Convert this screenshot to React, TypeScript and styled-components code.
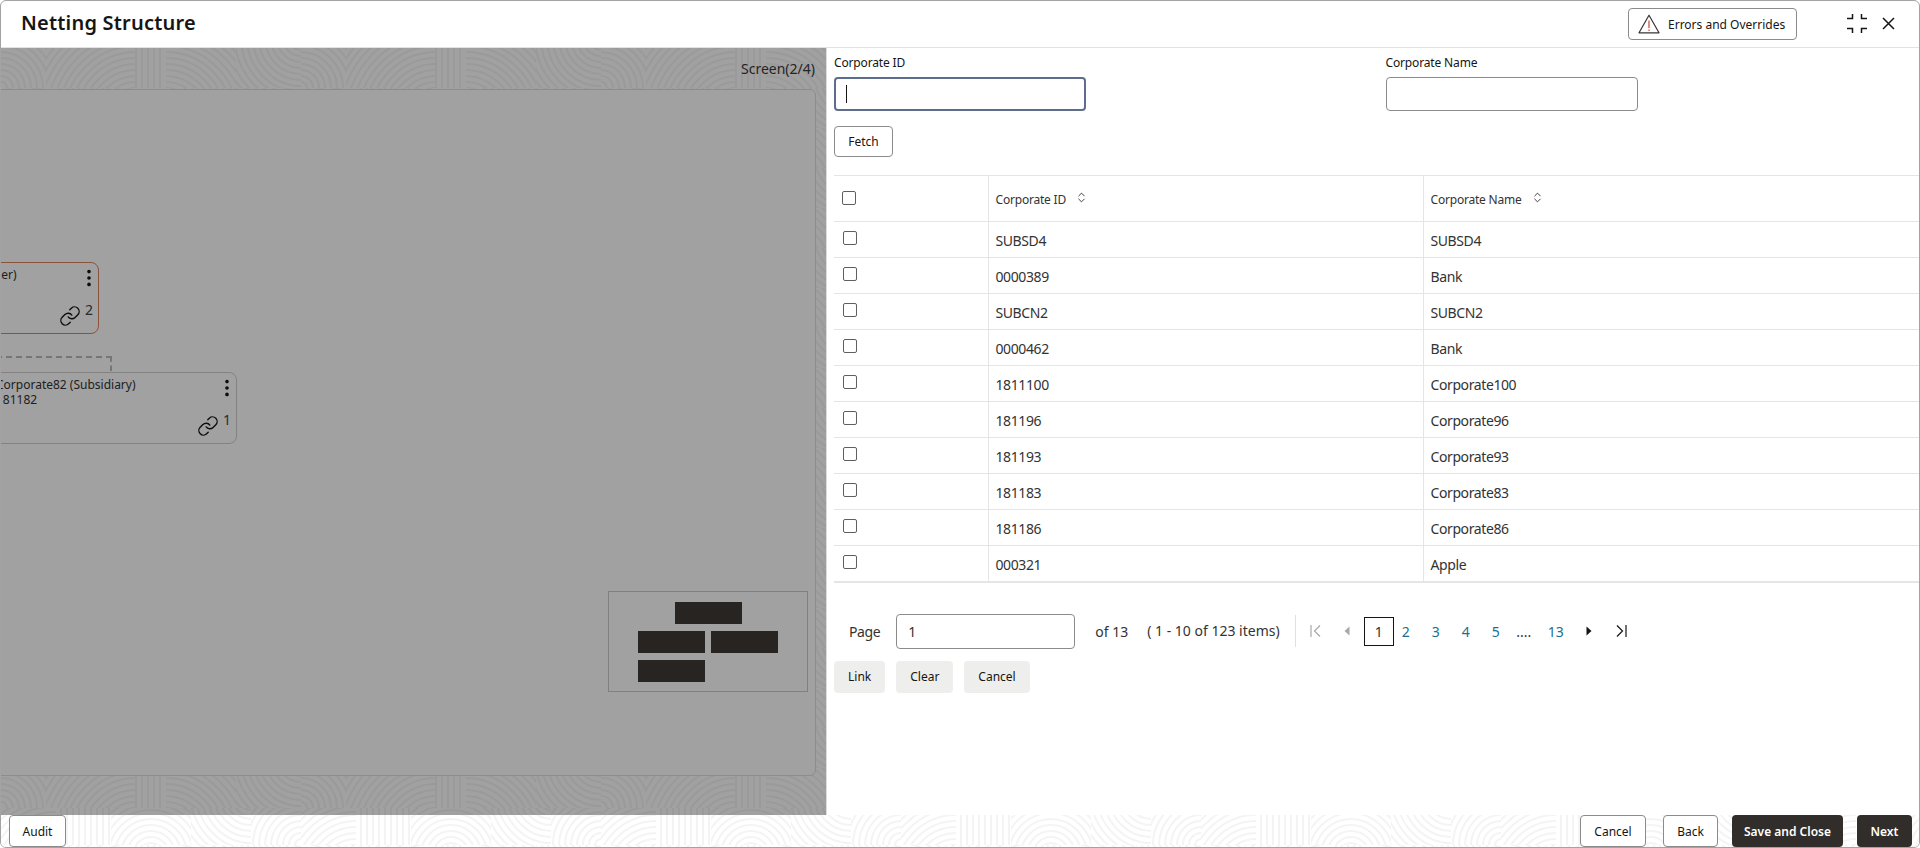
import React from 'react';
import styled, { createGlobalStyle } from 'styled-components';
import { ChevronsUpDown, EllipsisVertical, Link } from 'lucide-react';

// faint fingerprint-like background tile used behind the canvas and the footer
const arcs = (id: string, x: number, y: number, w: number, h: number, cx: number, cy: number) => {
  let circles = '';
  for (let r = 6; r < 200; r += 6) {
    circles += `<circle cx="${cx}" cy="${cy}" r="${r}"/>`;
  }
  return `<clipPath id="${id}"><rect x="${x}" y="${y}" width="${w}" height="${h}"/></clipPath><g clip-path="url(#${id})">${circles}</g>`;
};

const bars = (x: number, y: number, w: number, h: number) => {
  let lines = '';
  for (let i = x; i < x + w; i += 6) {
    lines += `<path d="M${i} ${y}V${y + h}"/>`;
  }
  return lines;
};

const tile = `<svg xmlns="http://www.w3.org/2000/svg" width="300" height="80" fill="none" stroke="#f4f4f4" stroke-width="2">
${arcs('a', 0, 0, 45, 40, 0, 40)}
${arcs('b', 45, 0, 90, 40, 135, 70)}
${bars(135, 0, 30, 40)}
${arcs('c', 165, 0, 70, 40, 165, 70)}
${arcs('d', 235, 0, 65, 40, 300, -10)}
${arcs('e', 0, 40, 55, 40, 55, 110)}
${bars(60, 40, 50, 40)}
${arcs('f', 110, 40, 80, 40, 150, 90)}
${arcs('g', 190, 40, 60, 40, 250, 30)}
${arcs('h', 250, 40, 50, 40, 300, 80)}
</svg>`;

const patternUrl = `data:image/svg+xml,${encodeURIComponent(tile)}`;

const GlobalStyle = createGlobalStyle`
  html, body {
    margin: 0;
    padding: 0;
    background: #ffffff;
  }
  * {
    box-sizing: border-box;
  }
  body {
    font-family: "Noto Sans", "Liberation Sans", sans-serif;
    color: #161513;
  }
`;

const Frame = styled.div`
  width: 1920px;
  height: 848px;
  display: flex;
  flex-direction: column;
  border: 1px solid #a3a3a3;
  border-radius: 6px;
  overflow: hidden;
  background: #ffffff;
`;

const Header = styled.header`
  height: 47px;
  flex: none;
  display: flex;
  align-items: center;
  padding: 0 24px 2px 20px;
  border-bottom: 1px solid #e2e2e2;
`;

const Title = styled.h1`
  margin: 0;
  font-size: 20px;
  line-height: 28px;
  font-weight: 600;
  letter-spacing: 0.2px;
  flex: 1;
`;

const OutlineButton = styled.button`
  height: 32px;
  padding: 0 13px;
  display: inline-flex;
  align-items: center;
  background: #ffffff;
  border: 1px solid #8b8b8b;
  border-radius: 4px;
  font-family: inherit;
  font-size: 12px;
  color: #161513;
`;

const ErrorsButton = styled(OutlineButton)`
  width: 169px;
  padding: 0 0 0 9px;
  gap: 8px;
  margin: 2px 50px 0 0;
`;

const HeaderIcon = styled.svg`
  display: block;
  flex: none;
`;

const CloseIcon = styled(HeaderIcon)`
  margin-left: 15px;
`;

const Body = styled.div`
  flex: 1;
  display: flex;
  min-height: 0;
`;

const CanvasPane = styled.section`
  width: 825px;
  flex: none;
  position: relative;
  overflow: hidden;
  display: flex;
  flex-direction: column;
  background: #ffffff url("${patternUrl}");
`;

const Dimmer = styled.div`
  position: absolute;
  inset: 0;
  background: rgba(0, 0, 0, 0.37);
`;

const ScreenLabel = styled.div`
  height: 41px;
  flex: none;
  padding: 11px 11px 0 0;
  text-align: right;
  font-size: 14px;
  line-height: 20px;
  color: #3a3a3a;
`;

const Canvas = styled.div`
  flex: 1;
  position: relative;
  margin: 0 10px 39px -8px;
  background: #ffffff;
  border: 1px solid #dedede;
  border-radius: 6px;
`;

const NodeCard = styled.div<{ $left: number; $top: number; $accent?: boolean }>`
  position: absolute;
  left: ${(p) => p.$left}px;
  top: ${(p) => p.$top}px;
  width: 253px;
  height: 72px;
  padding: 4px 8px 4px 11px;
  background: #ffffff;
  border: 1px solid ${(p) => (p.$accent ? '#e0835c' : '#cfcfcf')};
  border-radius: 8px;
  font-size: 12px;
  line-height: 15px;
  white-space: nowrap;
  color: #333333;
`;

const NodeMenu = styled(EllipsisVertical)`
  position: absolute;
  right: -2px;
  top: 4px;
  color: #161513;
`;

const NodeLink = styled(Link)`
  position: absolute;
  right: 17px;
  bottom: 6px;
  color: #161513;
`;

const NodeCount = styled.span`
  position: absolute;
  right: 5px;
  bottom: 15px;
  font-size: 14px;
  line-height: 16px;
  color: #444444;
`;

const Connector = styled.div`
  position: absolute;
  left: -8px;
  top: 266px;
  width: 126px;
  height: 15px;
  border-top: 2px dashed #bcbcbc;
  border-right: 2px dashed #bcbcbc;
`;

const MiniMap = styled.div`
  position: absolute;
  right: 7px;
  bottom: 83px;
  width: 200px;
  height: 101px;
  padding: 10px 29px 0;
  display: grid;
  grid-template-columns: 67px 67px;
  grid-auto-rows: 22px;
  column-gap: 6px;
  row-gap: 7px;
  border: 1px solid #cfc9c9;
`;

const MiniNode = styled.div<{ $column?: string }>`
  background: #3e3a36;
  ${(p) => p.$column && `grid-column: ${p.$column}; justify-self: center; width: 67px;`}
`;

const FormPane = styled.section`
  flex: 1;
  min-width: 0;
  display: flex;
  flex-direction: column;
  padding: 7px 0 0 7px;
  background: #ffffff;
  border-left: 1px solid #dcdcdc;
`;

const FieldRow = styled.div`
  display: flex;
`;

const Field = styled.div`
  width: 551.5px;
  flex: none;
`;

const FieldLabel = styled.label`
  display: block;
  font-size: 12px;
  line-height: 16px;
  letter-spacing: -0.15px;
  margin-bottom: 6px;
`;

const FieldBox = styled.div<{ $focused?: boolean }>`
  width: 252px;
  height: 34px;
  padding-left: 10px;
  display: flex;
  align-items: center;
  background: #ffffff;
  border: ${(p) => (p.$focused ? '2px solid #5f6d8c' : '1px solid #8b8b8b')};
  border-radius: 4px;
`;

const Caret = styled.span`
  width: 1px;
  height: 18px;
  background: #161513;
`;

const FetchButton = styled(OutlineButton)`
  align-self: flex-start;
  width: 59px;
  height: 31px;
  justify-content: center;
  padding: 0;
  margin-top: 15px;
`;

const Table = styled.table`
  margin-top: 18px;
  width: 100%;
  table-layout: fixed;
  border-collapse: collapse;
  border-top: 1px solid #e5e5e5;
  border-bottom: 2px solid #e5e5e5;
`;

const HeadCell = styled.th<{ $width?: number }>`
  ${(p) => p.$width && `width: ${p.$width}px;`}
  height: 46px;
  padding: 0 7px;
  text-align: left;
  font-size: 12px;
  font-weight: 400;
  letter-spacing: -0.2px;
  color: #333333;
  border-bottom: 1px solid #e5e5e5;
  border-left: 1px solid #e5e5e5;
  &:first-child {
    border-left: 0;
  }
`;

const HeadInner = styled.span`
  display: inline-flex;
  align-items: center;
  gap: 9px;
  position: relative;
  top: 1px;
`;

const SortIcon = styled(ChevronsUpDown)`
  position: relative;
  top: -2px;
  color: #161513;
`;

const Cell = styled.td`
  height: 36px;
  padding: 3px 7px 0;
  font-size: 14px;
  line-height: 20px;
  letter-spacing: -0.4px;
  color: #333333;
  border-bottom: 1px solid #e5e5e5;
  border-left: 1px solid #e5e5e5;
  &:first-child {
    border-left: 0;
    padding: 0 0 3px 9px;
  }
  tr:last-child & {
    border-bottom: 0;
  }
`;

const Check = styled.span<{ $head?: boolean }>`
  display: block;
  width: 14px;
  height: 14px;
  background: #ffffff;
  border: 1px solid #5f5f5f;
  border-radius: 2px;
  ${(p) => p.$head && 'margin: -2px 0 0 1px;'}
`;

const Pager = styled.div`
  margin-top: 31px;
  padding-left: 15px;
  height: 35px;
  display: flex;
  align-items: center;
  font-size: 14px;
  color: #333333;
`;

const PageText = styled.span`
  letter-spacing: -0.4px;
`;

const PageBox = styled.div`
  width: 179px;
  height: 35px;
  margin: 0 20px 0 16px;
  padding-left: 11px;
  display: flex;
  align-items: center;
  border: 1px solid #8b8b8b;
  border-radius: 4px;
`;

const Range = styled.span`
  margin-left: 19px;
  padding-right: 15px;
  height: 32px;
  line-height: 32px;
  border-right: 1px solid #e0e0e0;
`;

const PageIcon = styled.svg<{ $gap: number }>`
  display: block;
  flex: none;
  margin-left: ${(p) => p.$gap}px;
`;

const CurrentPage = styled.span`
  width: 30px;
  height: 29px;
  margin-left: 14px;
  display: flex;
  align-items: center;
  justify-content: center;
  border: 1px solid #161513;
`;

const PageLink = styled.a`
  width: 24px;
  margin-left: 6px;
  text-align: center;
  color: #1b6f94;
  &:first-of-type {
    margin-left: 0;
  }
`;

const Ellipsis = styled.span`
  width: 20px;
  margin: 0 4px 0 6px;
  text-align: center;
`;

const ActionRow = styled.div`
  margin-top: 12px;
  display: flex;
  gap: 11px;
`;

const SoftButton = styled.button`
  height: 32px;
  padding: 0 14px;
  background: #eeeeec;
  border: 0;
  border-radius: 4px;
  font-family: inherit;
  font-size: 12px;
  color: #161513;
`;

const Footer = styled.footer`
  height: 32px;
  flex: none;
  display: flex;
  align-items: center;
  padding: 0 7px 0 8px;
  background: #ffffff url("${patternUrl}") 0 30px;
`;

const FooterSpacer = styled.div`
  flex: 1;
`;

const AuditButton = styled(OutlineButton)`
  width: 57px;
  justify-content: center;
  padding: 0;
`;

const FooterButton = styled(OutlineButton)<{ $width: number; $gap: number }>`
  width: ${(p) => p.$width}px;
  margin-left: ${(p) => p.$gap}px;
  justify-content: center;
  padding: 0;
`;

const PrimaryButton = styled.button<{ $width: number; $gap: number }>`
  width: ${(p) => p.$width}px;
  height: 32px;
  margin-left: ${(p) => p.$gap}px;
  padding: 0;
  background: #312d2a;
  border: 0;
  border-radius: 4px;
  font-family: inherit;
  font-size: 12px;
  font-weight: 600;
  color: #ffffff;
`;

const rows = [
  ['SUBSD4', 'SUBSD4'],
  ['0000389', 'Bank'],
  ['SUBCN2', 'SUBCN2'],
  ['0000462', 'Bank'],
  ['1811100', 'Corporate100'],
  ['181196', 'Corporate96'],
  ['181193', 'Corporate93'],
  ['181183', 'Corporate83'],
  ['181186', 'Corporate86'],
  ['000321', 'Apple'],
];

const App: React.FC = () => {
  return (
    <Frame>
      <GlobalStyle />
      <Header>
        <Title>Netting Structure</Title>
        <ErrorsButton>
          <HeaderIcon width="22" height="20" viewBox="0 0 22 20" fill="none">
            <path d="M11 1.2 21 18.8H1Z" stroke="#3a3632" strokeWidth="1.2" strokeLinejoin="round" />
            <path d="M11 6.5V14M11 15.5V17" stroke="#c74634" strokeWidth="1.2" />
          </HeaderIcon>
          Errors and Overrides
        </ErrorsButton>
        <HeaderIcon width="20" height="20" viewBox="0 0 20 20" fill="none" stroke="#161513" strokeWidth="1.5">
          <path d="M0 5.5H5.5V1M20 5.5H14.5V1M0 15.5H5.5V20M20 15.5H14.5V20" />
        </HeaderIcon>
        <CloseIcon width="13" height="13" viewBox="0 0 13 13" fill="none" stroke="#161513" strokeWidth="1.5">
          <path d="M1 1 12 12M12 1 1 12" />
        </CloseIcon>
      </Header>
      <Body>
        <CanvasPane>
          <ScreenLabel>Screen(2/4)</ScreenLabel>
          <Canvas>
            <NodeCard $left={-148} $top={172} $accent>
              Corporate1 (Netting Leader)
              <br />
              181181
              <NodeMenu size={22} strokeWidth={2} />
              <NodeLink size={22} strokeWidth={1.5} />
              <NodeCount>2</NodeCount>
            </NodeCard>
            <Connector />
            <NodeCard $left={-10} $top={282}>
              Corporate82 (Subsidiary)
              <br />
              181182
              <NodeMenu size={22} strokeWidth={2} />
              <NodeLink size={22} strokeWidth={1.5} />
              <NodeCount>1</NodeCount>
            </NodeCard>
            <MiniMap>
              <MiniNode $column="1 / 3" />
              <MiniNode />
              <MiniNode />
              <MiniNode />
            </MiniMap>
          </Canvas>
          <Dimmer />
        </CanvasPane>
        <FormPane>
          <FieldRow>
            <Field>
              <FieldLabel>Corporate ID</FieldLabel>
              <FieldBox $focused>
                <Caret />
              </FieldBox>
            </Field>
            <Field>
              <FieldLabel>Corporate Name</FieldLabel>
              <FieldBox />
            </Field>
          </FieldRow>
          <FetchButton>Fetch</FetchButton>
          <Table>
            <thead>
              <tr>
                <HeadCell $width={154}>
                  <Check $head />
                </HeadCell>
                <HeadCell $width={435}>
                  <HeadInner>
                    Corporate ID
                    <SortIcon size={13} strokeWidth={1.5} />
                  </HeadInner>
                </HeadCell>
                <HeadCell>
                  <HeadInner>
                    Corporate Name
                    <SortIcon size={13} strokeWidth={1.5} />
                  </HeadInner>
                </HeadCell>
              </tr>
            </thead>
            <tbody>
              {rows.map((row) => (
                <tr key={row[0]}>
                  <Cell>
                    <Check />
                  </Cell>
                  <Cell>{row[0]}</Cell>
                  <Cell>{row[1]}</Cell>
                </tr>
              ))}
            </tbody>
          </Table>
          <Pager>
            <PageText>Page</PageText>
            <PageBox>1</PageBox>
            of 13
            <Range>( 1 - 10 of 123 items)</Range>
            <PageIcon $gap={14} width="12" height="12" viewBox="0 0 12 12" fill="none" stroke="#a8a8a8" strokeWidth="1.2">
              <path d="M1 0V12M10 0.5 4.5 6 10 11.5" />
            </PageIcon>
            <PageIcon $gap={22} width="6" height="10" viewBox="0 0 6 10" fill="#a8a8a8">
              <path d="M5.5 0.5V9.5L0.5 5Z" />
            </PageIcon>
            <CurrentPage>1</CurrentPage>
            <PageLink>2</PageLink>
            <PageLink>3</PageLink>
            <PageLink>4</PageLink>
            <PageLink>5</PageLink>
            <Ellipsis>....</Ellipsis>
            <PageLink>13</PageLink>
            <PageIcon $gap={18} width="6" height="10" viewBox="0 0 6 10" fill="#161513">
              <path d="M0.5 0.5V9.5L5.5 5Z" />
            </PageIcon>
            <PageIcon $gap={23} width="12" height="12" viewBox="0 0 12 12" fill="none" stroke="#161513" strokeWidth="1.2">
              <path d="M11 0V12M2 0.5 7.5 6 2 11.5" />
            </PageIcon>
          </Pager>
          <ActionRow>
            <SoftButton>Link</SoftButton>
            <SoftButton>Clear</SoftButton>
            <SoftButton>Cancel</SoftButton>
          </ActionRow>
        </FormPane>
      </Body>
      <Footer>
        <AuditButton>Audit</AuditButton>
        <FooterSpacer />
        <FooterButton $width={66} $gap={0}>Cancel</FooterButton>
        <FooterButton $width={55} $gap={17}>Back</FooterButton>
        <PrimaryButton $width={111} $gap={14}>Save and Close</PrimaryButton>
        <PrimaryButton $width={55} $gap={14}>Next</PrimaryButton>
      </Footer>
    </Frame>
  );
};

export default App;
